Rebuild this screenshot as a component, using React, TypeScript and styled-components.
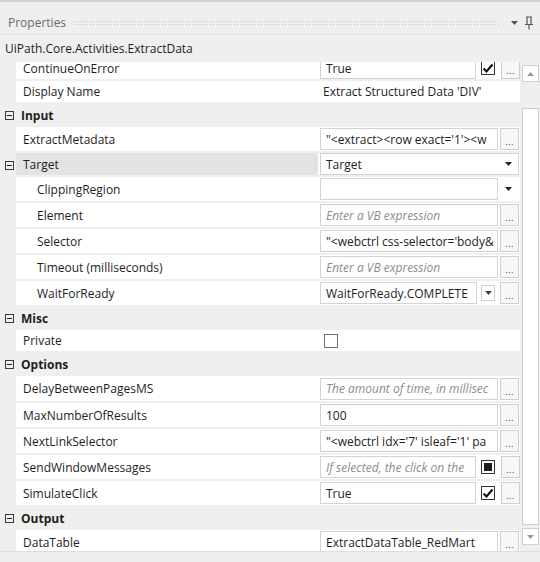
import React from "react";
import styled, { createGlobalStyle, css } from "styled-components";

const Global = createGlobalStyle`
  html, body { margin: 0; padding: 0; background: #efefef; }
  body { font-family: "Open Sans", "Noto Sans", sans-serif; }
  * { box-sizing: border-box; }
`;

const BG = "#efefef";
const FS = "12px";

const Panel = styled.div`
  width: 540px;
  height: 562px;
  display: flex;
  flex-direction: column;
  background: ${BG};
  overflow: hidden;
  font-size: ${FS};
  color: #1e1e1e;
`;

const Header = styled.div`
  height: 35px;
  flex: none;
  border-top: 2px solid #d2d2d2;
  border-bottom: 1px solid #e2e2e2;
  display: flex;
  align-items: center;
  padding: 9px 6px 0 8px;
  gap: 8px;
`;

const Title = styled.span`
  color: #6b6b6b;
  font-size: 12px;
`;

const Grip = styled.div`
  flex: 1;
  height: 6px;
  margin: 0 4px 0 0;
  background-image: radial-gradient(circle, #c2c2c2 40%, transparent 45%);
  background-size: 3px 3px;
`;

const HeaderIcons = styled.div`
  display: flex;
  align-items: center;
  gap: 6px;
`;

const TypeLabel = styled.div`
  height: 27px;
  flex: none;
  display: flex;
  align-items: center;
  padding-left: 5px;
  font-size: 12px;
`;

const GridArea = styled.div`
  height: 489px;
  flex: none;
  display: flex;
`;

const Viewport = styled.div`
  width: 520px;
  flex: none;
  overflow: hidden;
`;

const Rows = styled.div`
  margin-top: -5px;
  display: flex;
  flex-direction: column;
`;

const CategoryRow = styled.div`
  height: 23px;
  display: flex;
  align-items: center;
  padding-left: 5px;
  gap: 7px;
  font-weight: 700;
  font-size: 12px;
`;

const Toggle = styled.span`
  width: 9px;
  height: 9px;
  border: 1px solid #3a3a3a;
  display: inline-flex;
  align-items: center;
  justify-content: center;
  flex: none;
  &::after {
    content: "";
    width: 5px;
    height: 1px;
    background: #222;
  }
`;

const PropRow = styled.div<{ $h: number }>`
  height: ${(p) => p.$h}px;
  display: grid;
  grid-template-columns: 16px 302px 202px;
`;

const Gutter = styled.div`
  display: flex;
  align-items: center;
  padding-left: 5px;
`;

const NameCell = styled.div<{ $indent: number; $selected?: boolean }>`
  background: ${(p) => (p.$selected ? "#e3e3e3" : "#ffffff")};
  border-bottom: 2px solid ${BG};
  display: flex;
  align-items: center;
  padding-left: ${(p) => p.$indent}px;
  white-space: nowrap;
`;

const ValueCell = styled.div<{ $plain?: boolean }>`
  background: #ffffff;
  border-bottom: 2px solid ${BG};
  display: flex;
  align-items: center;
  padding-left: ${(p) => (p.$plain ? 5 : 2)}px;
  white-space: nowrap;
`;

const TextBox = styled.div<{ $w: number; $ph?: boolean }>`
  width: ${(p) => p.$w}px;
  height: 22px;
  border: 1px solid #d3d3d3;
  background: #fff;
  display: flex;
  align-items: center;
  padding-left: 5px;
  overflow: hidden;
  white-space: nowrap;
  ${(p) =>
    p.$ph &&
    css`
      font-style: italic;
      color: #8c8c8c;
    `}
`;

const DotsButton = styled.div`
  width: 19px;
  height: 22px;
  margin-left: 2px;
  border: 1px solid #cfcfcf;
  background: #f7f7f7;
  display: flex;
  align-items: flex-end;
  justify-content: center;
  padding-bottom: 3px;
  font-size: 9px;
  line-height: 9px;
  color: #333;
  letter-spacing: 0.5px;
`;

const CheckBox = styled.div<{ $gray?: boolean }>`
  width: 14px;
  height: 14px;
  border: 1px solid ${(p) => (p.$gray ? "#707070" : "#333")};
  background: #fff;
  display: flex;
  align-items: center;
  justify-content: center;
  flex: none;
`;

const CheckSlot = styled.div<{ $left?: boolean }>`
  width: 22px;
  display: flex;
  justify-content: ${(p) => (p.$left ? "flex-start" : "center")};
  margin-left: ${(p) => (p.$left ? 4 : 1)}px;
`;

const Indeterminate = styled.span`
  width: 8px;
  height: 8px;
  background: #1e1e1e;
`;

const SmallDrop = styled.div`
  width: 14px;
  height: 16px;
  margin: 0 3px 0 4px;
  border: 1px solid #cfcfcf;
  display: flex;
  align-items: center;
  justify-content: center;
`;

const Combo = styled.div`
  width: 199px;
  height: 22px;
  border: 1px solid #d3d3d3;
  background: #fff;
  display: flex;
  align-items: center;
  justify-content: space-between;
  padding: 0 6px 0 5px;
`;

const ArrowSlot = styled.div`
  width: 21px;
  display: flex;
  justify-content: center;
`;

const Scrollbar = styled.div`
  width: 17px;
  margin-left: 2px;
  display: flex;
  flex-direction: column;
  padding: 3px 0 6px;
`;

const ScrollButton = styled.div`
  height: 17px;
  border: 1px solid #d0d0d0;
  background: #fff;
  display: flex;
  align-items: center;
  justify-content: center;
`;

const Track = styled.div`
  flex: 1;
  display: flex;
  padding: 26px 0 3px;
`;

const Thumb = styled.div`
  flex: 1;
  border: 1px solid #cdcdcd;
  background: #fff;
`;

const Footer = styled.div`
  flex: 1;
  border-top: 1px solid #dedede;
`;

const DownTri = ({ color = "#222" }: { color?: string }) => (
  <svg width="7" height="4" viewBox="0 0 7 4">
    <path d="M0 0 H7 L3.5 4 Z" fill={color} />
  </svg>
);

const UpTri = ({ color = "#9a9a9a" }: { color?: string }) => (
  <svg width="7" height="4" viewBox="0 0 7 4">
    <path d="M0 4 H7 L3.5 0 Z" fill={color} />
  </svg>
);

const Check = () => (
  <svg width="12" height="11" viewBox="0 0 12 11">
    <path d="M1.5 5.5 L4.5 8.5 L10.5 1.5" stroke="#111" strokeWidth="2.2" fill="none" />
  </svg>
);

const Pin = () => (
  <svg width="10" height="14" viewBox="0 0 10 14">
    <path d="M2 1 H8 M3 1 V8 M7 1 V8 M1 8.5 H9 M5 9 V13.5" stroke="#555" strokeWidth="1.2" fill="none" />
  </svg>
);

type Editor =
  | { kind: "text"; value: string; ph?: boolean }
  | { kind: "textCheck"; value: string; ph?: boolean; check: "on" | "ind" }
  | { kind: "textDrop"; value: string }
  | { kind: "drop" }
  | { kind: "combo"; value: string }
  | { kind: "check" }
  | { kind: "plain"; value: string };

type Item =
  | { type: "cat"; label: string }
  | { type: "prop"; label: string; h: number; indent?: number; editor: Editor; toggle?: boolean; selected?: boolean };

const items: Item[] = [
  { type: "prop", label: "ContinueOnError", h: 24, editor: { kind: "textCheck", value: "True", check: "on" } },
  { type: "prop", label: "Display Name", h: 23, editor: { kind: "plain", value: "Extract Structured Data 'DIV'" } },
  { type: "cat", label: "Input" },
  { type: "prop", label: "ExtractMetadata", h: 26, editor: { kind: "text", value: "\"<extract><row exact='1'><w" } },
  { type: "prop", label: "Target", h: 24, toggle: true, selected: true, editor: { kind: "combo", value: "Target" } },
  { type: "prop", label: "ClippingRegion", h: 26, indent: 21, editor: { kind: "drop" } },
  { type: "prop", label: "Element", h: 26, indent: 21, editor: { kind: "text", value: "Enter a VB expression", ph: true } },
  { type: "prop", label: "Selector", h: 26, indent: 21, editor: { kind: "text", value: "\"<webctrl css-selector='body&" } },
  { type: "prop", label: "Timeout (milliseconds)", h: 26, indent: 21, editor: { kind: "text", value: "Enter a VB expression", ph: true } },
  { type: "prop", label: "WaitForReady", h: 26, indent: 21, editor: { kind: "textDrop", value: "WaitForReady.COMPLETE" } },
  { type: "cat", label: "Misc" },
  { type: "prop", label: "Private", h: 23, editor: { kind: "check" } },
  { type: "cat", label: "Options" },
  { type: "prop", label: "DelayBetweenPagesMS", h: 27, editor: { kind: "text", value: "The amount of time, in millisec", ph: true } },
  { type: "prop", label: "MaxNumberOfResults", h: 26, editor: { kind: "text", value: "100" } },
  { type: "prop", label: "NextLinkSelector", h: 26, editor: { kind: "text", value: "\"<webctrl idx='7' isleaf='1' pa" } },
  { type: "prop", label: "SendWindowMessages", h: 26, editor: { kind: "textCheck", value: "If selected, the click on the", ph: true, check: "ind" } },
  { type: "prop", label: "SimulateClick", h: 26, editor: { kind: "textCheck", value: "True", check: "on" } },
  { type: "cat", label: "Output" },
  { type: "prop", label: "DataTable", h: 26, editor: { kind: "text", value: "ExtractDataTable_RedMart" } },
];

const renderEditor = (e: Editor) => {
  switch (e.kind) {
    case "text":
      return (
        <>
          <TextBox $w={178} $ph={e.ph}>{e.value}</TextBox>
          <DotsButton>...</DotsButton>
        </>
      );
    case "textCheck":
      return (
        <>
          <TextBox $w={157} $ph={e.ph}>{e.value}</TextBox>
          <CheckSlot>
            <CheckBox>{e.check === "on" ? <Check /> : <Indeterminate />}</CheckBox>
          </CheckSlot>
          <DotsButton>...</DotsButton>
        </>
      );
    case "textDrop":
      return (
        <>
          <TextBox $w={157}>{e.value}</TextBox>
          <SmallDrop>
            <DownTri color="#444" />
          </SmallDrop>
          <DotsButton>...</DotsButton>
        </>
      );
    case "drop":
      return (
        <>
          <TextBox $w={178} />
          <ArrowSlot>
            <DownTri />
          </ArrowSlot>
        </>
      );
    case "combo":
      return (
        <Combo>
          <span>{e.value}</span>
          <DownTri />
        </Combo>
      );
    case "check":
      return (
        <CheckSlot $left>
          <CheckBox $gray />
        </CheckSlot>
      );
    case "plain":
      return <span>{e.value}</span>;
  }
};

export default function App() {
  return (
    <>
      <Global />
      <Panel>
        <Header>
          <Title>Properties</Title>
          <Grip />
          <HeaderIcons>
            <DownTri color="#555" />
            <Pin />
          </HeaderIcons>
        </Header>
        <TypeLabel>UiPath.Core.Activities.ExtractData</TypeLabel>
        <GridArea>
          <Viewport>
            <Rows>
              {items.map((it, i) =>
                it.type === "cat" ? (
                  <CategoryRow key={i}>
                    <Toggle />
                    {it.label}
                  </CategoryRow>
                ) : (
                  <PropRow key={i} $h={it.h}>
                    <Gutter>{it.toggle && <Toggle />}</Gutter>
                    <NameCell $indent={it.indent ?? 7} $selected={it.selected}>
                      {it.label}
                    </NameCell>
                    <ValueCell $plain={it.editor.kind === "plain"}>{renderEditor(it.editor)}</ValueCell>
                  </PropRow>
                )
              )}
            </Rows>
          </Viewport>
          <Scrollbar>
            <ScrollButton>
              <UpTri />
            </ScrollButton>
            <Track>
              <Thumb />
            </Track>
            <ScrollButton>
              <DownTri color="#9a9a9a" />
            </ScrollButton>
          </Scrollbar>
        </GridArea>
        <Footer />
      </Panel>
    </>
  );
}
